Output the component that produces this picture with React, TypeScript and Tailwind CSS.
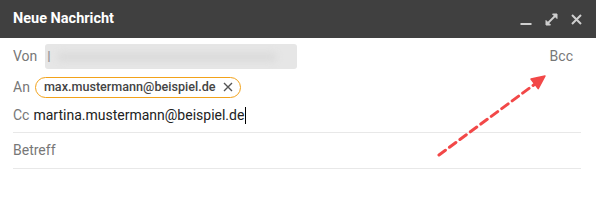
import React from "react";

export default function App() {
  return (
    <div className="relative w-[596px] h-[220px] bg-white overflow-hidden" style={{ fontFamily: "Roboto, 'Liberation Sans', sans-serif" }}>
      <div className="h-[38px] bg-[#404040] flex items-center justify-between pl-[13px] pr-[14px]">
        <span className="text-white text-[14.5px] font-bold">Neue Nachricht</span>
        <div className="flex items-center gap-[13px]">
          <svg width="12" height="12" viewBox="0 0 12 12" className="mt-[2px]">
            <rect x="0.5" y="9" width="11" height="2" fill="#cfcfcf" />
          </svg>
          <svg width="13" height="13" viewBox="0 0 13 13">
            <path d="M1.5 11.5 L11.5 1.5" stroke="#cfcfcf" strokeWidth="1.8" />
            <path d="M7.5 1 H12 V5.5 Z" fill="#cfcfcf" stroke="#cfcfcf" strokeWidth="1" strokeLinejoin="round" />
            <path d="M1 7.5 V12 H5.5 Z" fill="#cfcfcf" stroke="#cfcfcf" strokeWidth="1" strokeLinejoin="round" />
          </svg>
          <svg width="11" height="11" viewBox="0 0 11 11">
            <path d="M1 1 L10 10 M10 1 L1 10" stroke="#cfcfcf" strokeWidth="2" />
          </svg>
        </div>
      </div>
      <div className="pl-[13px] pr-[15px]">
        <div className="h-[37px] flex items-center justify-between">
          <div className="flex items-center">
            <span className="text-[14px] text-[#777]">Von</span>
            <div className="ml-[8px] w-[252px] h-[25px] rounded-[3px] bg-[#e6e6e6] flex items-center pl-[2px] overflow-hidden">
              <span className="text-[14px] text-[#999] leading-none">l</span>
              <div className="ml-[6px] h-[10px] w-[220px] rounded-full bg-[#dcdcdc] blur-[3px]" />
            </div>
          </div>
          <span className="text-[14px] text-[#777] mr-[8px]">Bcc</span>
        </div>
        <div className="h-[24px] flex items-center">
          <span className="text-[14px] text-[#777]">An</span>
          <div className="ml-[5px] h-[21px] w-[206px] rounded-full border-[1.5px] border-[#f2a21a] flex items-center pl-[8px] pr-[7px] justify-between">
            <span className="text-[12.6px] font-medium text-[#444]">max.mustermann@beispiel.de</span>
            <svg width="10" height="10" viewBox="0 0 10 10">
              <path d="M1 1 L9 9 M9 1 L1 9" stroke="#555" strokeWidth="1.4" />
            </svg>
          </div>
        </div>
        <div className="h-[34px] flex items-center border-b border-[#e8e8e8]">
          <span className="text-[14px] text-[#777]">Cc</span>
          <span className="ml-[4px] text-[14px] text-[#222]">martina.mustermann@beispiel.de</span>
          <span className="ml-[1px] w-[1px] h-[17px] bg-black" />
        </div>
        <div className="h-[36px] flex items-center border-b border-[#e8e8e8]">
          <span className="text-[14px] text-[#777]">Betreff</span>
        </div>
      </div>
      <svg className="absolute left-0 top-0 pointer-events-none" width="596" height="220">
        <line x1="439" y1="155" x2="535" y2="84" stroke="#f24848" strokeWidth="3" strokeDasharray="8 5" strokeLinecap="round" />
        <polygon points="545,76 538.2,88.6 531,79" fill="#f24848" stroke="#f24848" strokeWidth="1.5" strokeLinejoin="round" />
      </svg>
    </div>
  );
}
